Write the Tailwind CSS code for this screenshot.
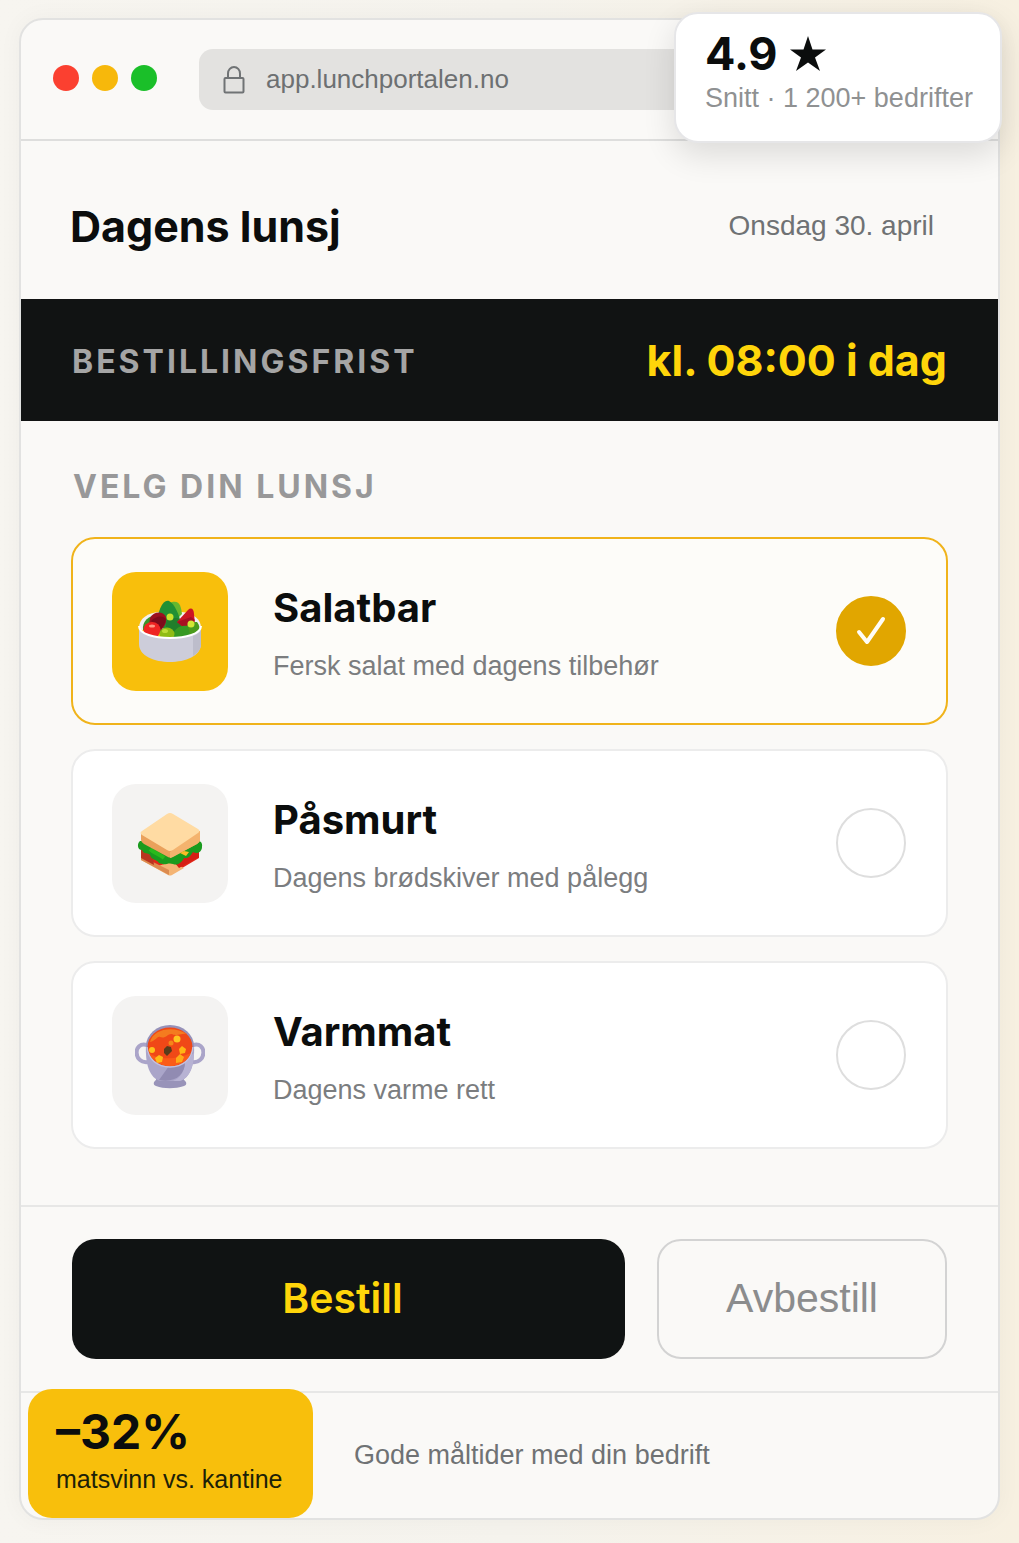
<!DOCTYPE html>
<html lang="no">
<head>
  <meta charset="UTF-8">
  <meta name="viewport" content="width=device-width, initial-scale=1.0">
  <title>Lunchportalen</title>
  <script src="https://cdn.jsdelivr.net/npm/@tailwindcss/browser@4"></script>
</head>
<body class="min-h-screen bg-linear-to-r from-[#f7f5f0] via-[#f5f3ed] to-[#f7f0e1] px-[19px] pt-[18px] pb-6 font-['Liberation_Sans',sans-serif] text-[#0b0d0d]">

  <!-- Nettleservindu -->
  <div class="relative rounded-3xl border-2 border-[#e2e2e1] bg-[#faf9f7] shadow-[0_0_24px_rgba(0,0,0,0.04)]">

    <!-- Adresselinje -->
    <header class="flex h-[121px] items-center border-b-2 border-[#dededd] pl-8">
      <div class="flex gap-[13px] pb-1">
        <span class="size-[26px] rounded-full bg-[#fb4030]"></span>
        <span class="size-[26px] rounded-full bg-[#f7b80b]"></span>
        <span class="size-[26px] rounded-full bg-[#1abf29]"></span>
      </div>
      <div class="ml-[42px] mr-8 flex h-[61px] flex-1 items-center rounded-[14px] bg-[#e3e2e0] pl-6">
        <svg class="h-7 w-[23px]" viewBox="0 0 23 28" fill="none" stroke="#707375" stroke-width="2" stroke-linejoin="round">
          <rect x="1.500" y="12" width="19" height="14.500" rx="1"/>
          <path d="M5 12V7.500a6 6.500 0 0 1 12 0V12"/>
        </svg>
        <span class="ml-5 text-[26px] text-[#6d7072]">app.lunchportalen.no</span>
      </div>
    </header>

    <!-- Tittel og dato -->
    <div class="flex h-[158px] items-center justify-between pt-3 pr-16 pl-[49px]">
      <h1 class="font-['Inter',sans-serif] text-[43px] font-bold">Dagens lunsj</h1>
      <time class="text-[28px] text-[#6f7274]" datetime="2025-04-30">Onsdag 30. april</time>
    </div>

    <!-- Bestillingsfrist -->
    <div class="flex h-[122px] items-center justify-between bg-[#111313] px-[51px]">
      <span class="pt-1 font-['Inter',sans-serif] text-[32px] font-bold tracking-[3px] text-[#a5a5a5]">BESTILLINGSFRIST</span>
      <span class="font-['Inter',sans-serif] text-[43px] font-bold text-[#ffd50a]">kl. 08:00 i dag</span>
    </div>

    <!-- Menyvalg -->
    <fieldset class="px-[50px] pb-14">
      <legend class="h-[116px] pt-10 pl-0.5 font-['Inter',sans-serif] text-[32px] leading-[52px] font-bold tracking-[3px] text-[#989899]">VELG DIN LUNSJ</legend>

      <div class="flex flex-col gap-6">
        <label class="flex h-[188px] items-center rounded-3xl border-2 border-[#ececec] bg-white pr-10 pl-[39px] has-checked:border-[#f0b31b] has-checked:bg-[#fdfcf9]">
          <span class="flex h-[119px] w-[116px] items-center justify-center rounded-3xl bg-[#f8bf0c]">
            <svg class="size-[68px]" viewBox="0 0 68 68">
              <path d="M3 31c0-10 9-15 20-16h22c12 1 20 7 20 16 0 5-62 5-62 0Z" fill="#f1f1f4"/>
              <path d="M7 33c-1-8 5-15 15-15l6 18Z" fill="#38942b"/>
              <path d="M36 5c8-2 9 5 10 12l-8 8-5-18Z" fill="#67b82e"/>
              <path d="M22 18C25 7 29 3 33 4c6 3 10 14 12 22L32 37 22 25Z" fill="#219034"/>
              <path d="M35 21c-7 0-6 14-1 18l15-7-7-11Z" fill="#217e2b"/>
              <path d="M41 25 52 13c3-3 6-1 6 4l1 10-10 5Z" fill="#cc1524"/>
              <path d="m41 25 14-5 4 3-9 9Z" fill="#a80f22"/>
              <path d="M14 21c4-7 13-7 16-1 1 5-1 9-5 13l-12-5Z" fill="#9b1020"/>
              <path d="M15 24c5-5 11-6 15-2-1 5-3 8-5 10Z" fill="#7c0b1b"/>
              <ellipse cx="16" cy="33" rx="8.500" ry="8" fill="#ef2423"/>
              <ellipse cx="16" cy="29" rx="3" ry="1.500" fill="#ff9884"/>
              <path d="M47 38c0-8 7-14 14-13 5 6 2 14-2 16l-10 1Z" fill="#4b9b1d"/>
              <path d="M37 40c0-7 6-12 14-11 4 5 3 12-2 14H38Z" fill="#359923"/>
              <ellipse cx="31" cy="37" rx="7.500" ry="6.500" fill="#8fbc15"/>
              <ellipse cx="29" cy="34" rx="3" ry="2" fill="#bddc37"/>
              <circle cx="34" cy="20" r="3.500" fill="#c9e32c"/>
              <circle cx="55" cy="27" r="3.500" fill="#d3e635"/>
              <path d="M3 29C3 45 65 45 65 29v18c0 24-62 24-62 0Z" fill="#cdcdda"/>
              <path d="M3 29C3 45 65 45 65 29" fill="none" stroke="#fff" stroke-width="2"/>
              <path d="M57 39v20c5-3 8-7 8-12V33q-2 4-8 6Z" fill="#bdbdcb"/>
            </svg>
          </span>
          <span class="ml-[45px] flex flex-1 flex-col gap-[18px] pt-1">
            <span class="font-['Inter',sans-serif] text-[40px] leading-[48px] font-bold">Salatbar</span>
            <span class="text-[27px] leading-8 text-[#7b7d7f]">Fersk salat med dagens tilbehør</span>
          </span>
          <span class="relative size-[70px]">
            <input class="peer size-full appearance-none rounded-full border-2 border-[#dedede] bg-white checked:border-[#e1a600] checked:bg-[#e1a600]" type="radio" name="lunsj" value="salatbar" checked>
            <svg class="pointer-events-none absolute inset-0 hidden peer-checked:block" viewBox="0 0 70 70" fill="none" stroke="#fffdf6" stroke-width="4" stroke-linecap="round" stroke-linejoin="round"><path d="m23 36 8 10 16-23"/></svg>
          </span>
        </label>

        <label class="flex h-[188px] items-center rounded-3xl border-2 border-[#ececec] bg-white pr-10 pl-[39px] has-checked:border-[#f0b31b] has-checked:bg-[#fdfcf9]">
          <span class="flex h-[119px] w-[116px] items-center justify-center rounded-3xl bg-[#f4f3f2]">
            <svg class="size-[68px]" viewBox="0 0 68 68">
              <path d="M5 37v13l27 15q2 1 4 0l27-16V36Z" fill="#e32618"/>
              <path d="M5 47v4l27 15q2 1 4 0l12-7-13-6-13 4Z" fill="#f4b474"/>
              <path d="M5 47v4l28 15v-5Z" fill="#dc8b50"/>
              <path d="m5 38 12 10 1 8L5 49Z" fill="#b93420"/>
              <path d="m34 48 29-11v11L43 59Z" fill="#d51f15"/>
              <path d="M4 32c-3 2-3 9 2 9 2 5 6 2 8 5 2 6 7 4 9 8 6 3 9-1 14 1 5 2 9-2 11-6 5 1 7-3 9-6 5 3 9-1 9-5 1-5-3-7-5-6Z" fill="#1a9b1e"/>
              <path d="M14 40c4 4 9 5 14 9" fill="none" stroke="#29ba1c" stroke-width="4"/>
              <path d="M5 23v8q0 2 3 4l24 13q2 1 4 0l25-13q3-2 3-4v-9Z" fill="#eaa15b"/>
              <path d="M34 43v6q1 0 3-1l24-13q3-2 3-4v-9Z" fill="#f4b36e"/>
              <path d="m44 44 4-2 5 1-3 4Z" fill="#f9bd25"/>
              <path d="M31 5q3-2 6 0l25 15q3 2 0 4L37 41q-3 2-6 0L6 26q-3-2 0-4Z" fill="#ffdba3"/>
            </svg>
          </span>
          <span class="ml-[45px] flex flex-1 flex-col gap-[18px] pt-1">
            <span class="font-['Inter',sans-serif] text-[40px] leading-[48px] font-bold">Påsmurt</span>
            <span class="text-[27px] leading-8 text-[#7b7d7f]">Dagens brødskiver med pålegg</span>
          </span>
          <span class="relative size-[70px]">
            <input class="peer size-full appearance-none rounded-full border-2 border-[#dedede] bg-white checked:border-[#e1a600] checked:bg-[#e1a600]" type="radio" name="lunsj" value="pasmurt">
            <svg class="pointer-events-none absolute inset-0 hidden peer-checked:block" viewBox="0 0 70 70" fill="none" stroke="#fffdf6" stroke-width="4" stroke-linecap="round" stroke-linejoin="round"><path d="m23 36 8 10 16-23"/></svg>
          </span>
        </label>

        <label class="flex h-[188px] items-center rounded-3xl border-2 border-[#ececec] bg-white pr-10 pl-[39px] has-checked:border-[#f0b31b] has-checked:bg-[#fdfcf9]">
          <span class="flex h-[119px] w-[116px] items-center justify-center rounded-3xl bg-[#f4f3f2]">
            <svg class="size-[70px]" viewBox="0 0 70 70">
              <path d="M12 25C-2 21-2 44 13 42M58 25c14-4 14 19-1 17" fill="none" stroke="#aaa4c9" stroke-width="4"/>
              <path d="M21 57v3c-3 2-3 5 0 6 8 3 19 3 28 0 3-1 3-4 0-6v-3Z" fill="#9893b9"/>
              <path d="M11 25c-1 20 4 33 14 36h20c10-3 15-16 14-36Z" fill="#aaa5c9"/>
              <path d="M50 41c0 11-5 17-12 20h7c10-3 14-16 14-28Z" fill="#b7b2d3"/>
              <path d="M24 60c16 3 26-5 26-18l-16 4Z" fill="#918bb2"/>
              <ellipse cx="35" cy="26" rx="24" ry="21" fill="#9691b9"/>
              <ellipse cx="35" cy="27" rx="22.500" ry="19.500" fill="#f04817"/>
              <path d="M15 22c3-13 23-17 37-8-7-1-10 3-15 0-4-1-6 5-12 3-3-1-4 4-10 5Z" fill="#f47b1f"/>
              <path d="M14 33c9 7 27 7 42 0-7 17-34 18-42 0Z" fill="#fb5b18"/>
              <circle cx="42" cy="19" r="3.500" fill="#ffc620"/>
              <circle cx="36" cy="23" r="2.500" fill="#f58619"/>
              <circle cx="17" cy="30" r="3" fill="#ffc21c"/>
              <path d="m44 29 3-3 4 3-1 4-5 1Z" fill="#ffb514"/>
              <path d="m41 38 4-4 4 3-2 5-6 1Z" fill="#ffaa17"/>
              <path d="m20 38 4-3 4 2-1 5-5 1Z" fill="#ffba18"/>
              <path d="m29 29 3-3 4 1 1 4-5 5-3-3Z" fill="#593c1b"/>
              <path d="M12 27c1 12 10 20 23 20s22-8 23-20" fill="none" stroke="#c4c0dc" stroke-width="1.500"/>
            </svg>
          </span>
          <span class="ml-[45px] flex flex-1 flex-col gap-[18px] pt-1">
            <span class="font-['Inter',sans-serif] text-[40px] leading-[48px] font-bold">Varmmat</span>
            <span class="text-[27px] leading-8 text-[#7b7d7f]">Dagens varme rett</span>
          </span>
          <span class="relative size-[70px]">
            <input class="peer size-full appearance-none rounded-full border-2 border-[#dedede] bg-white checked:border-[#e1a600] checked:bg-[#e1a600]" type="radio" name="lunsj" value="varmmat">
            <svg class="pointer-events-none absolute inset-0 hidden peer-checked:block" viewBox="0 0 70 70" fill="none" stroke="#fffdf6" stroke-width="4" stroke-linecap="round" stroke-linejoin="round"><path d="m23 36 8 10 16-23"/></svg>
          </span>
        </label>
      </div>
    </fieldset>

    <!-- Knapper -->
    <div class="grid grid-cols-[553fr_290fr] gap-8 border-y-2 border-[#e7e7e6] px-[51px] py-8">
      <button class="h-[120px] rounded-3xl bg-[#101313] pr-3 font-['Inter',sans-serif] text-[41px] font-semibold text-[#ffd50a]" type="button">Bestill</button>
      <button class="h-[120px] rounded-3xl border-2 border-[#d3d3d3] text-[41px] text-[#8b8c8d]" type="button">Avbestill</button>
    </div>

    <!-- Bunntekst -->
    <footer class="flex h-[125px] items-center pl-[333px]">
      <p class="text-[27px] text-[#6f7274]">Gode måltider med din bedrift</p>
    </footer>

    <!-- Merker over vinduet -->
    <div class="absolute -top-2 -right-1 h-[131px] w-[328px] rounded-3xl border-2 border-[#e6e6e8] bg-white pt-4 pl-[29px] shadow-[0_12px_32px_rgba(0,0,0,0.12)]">
      <div class="flex items-center gap-3 font-['Inter',sans-serif] text-[45px] leading-[48px] font-bold">
        4.9
        <svg class="size-9" viewBox="0 0 36 36" fill="#0b0d0d"><path d="m18 0 4.500 13.500H36L25 21.500 30 35l-12-8.500L6 35l5-13.500L0 13.500h13.500Z"/></svg>
      </div>
      <div class="mt-1 text-[27px] leading-8 text-[#8f9192]">Snitt · 1 200+ bedrifter</div>
    </div>
    <div class="absolute bottom-0 left-[7px] h-[129px] w-[285px] rounded-3xl bg-[#f8bf0c] pt-4 pl-7">
      <div class="font-['Inter',sans-serif] text-[48px] leading-[54px] font-bold">–32%</div>
      <div class="mt-1 text-[25px] leading-8 text-[#1c2108]">matsvinn vs. kantine</div>
    </div>
  </div>

</body>
</html>
